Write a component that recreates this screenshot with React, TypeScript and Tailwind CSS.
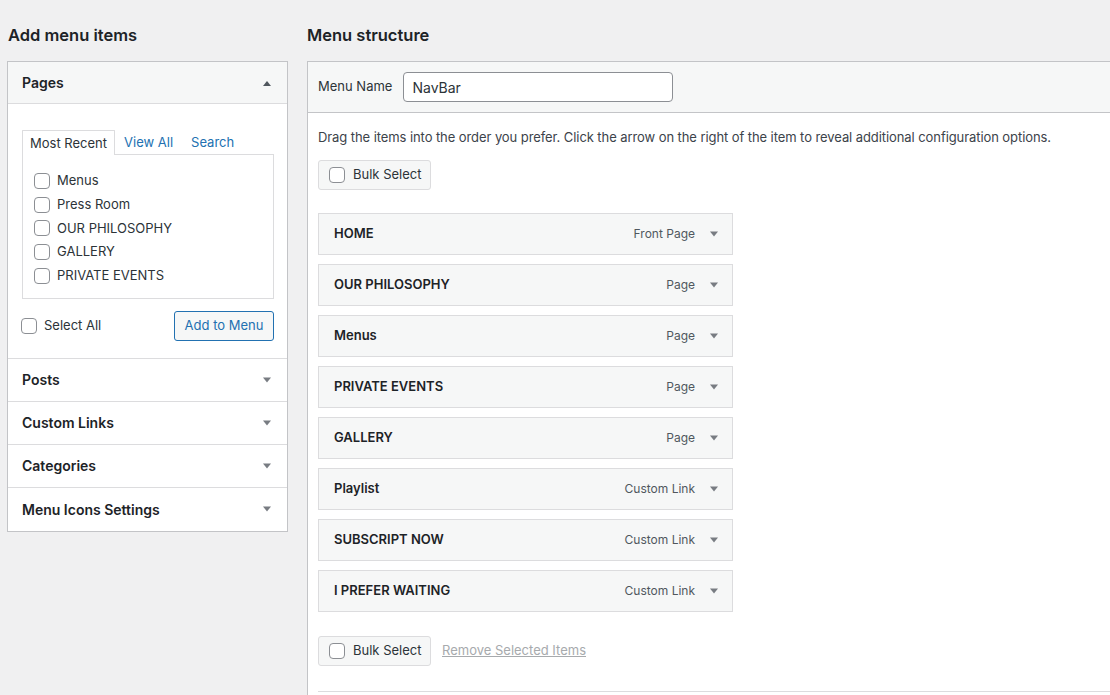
import React from "react";

const font = { fontFamily: "Inter, 'Noto Sans', 'Liberation Sans', sans-serif" };

function Check({ className = "" }: { className?: string }) {
  return (
    <span
      className={`inline-block h-4 w-4 shrink-0 rounded-[4px] border border-[#8c8f94] bg-white ${className}`}
    />
  );
}

function Tri({ up = false }: { up?: boolean }) {
  return (
    <svg width="10" height="6" viewBox="0 0 10 6" className="shrink-0">
      {up ? (
        <path d="M1 6 L5 1 L9 6 Z" fill="#50575e" />
      ) : (
        <path d="M1 0.5 L9 0.5 L5 5.5 Z" fill="#787c82" />
      )}
    </svg>
  );
}

const pages = ["Menus", "Press Room", "OUR PHILOSOPHY", "GALLERY", "PRIVATE EVENTS"];
const sections = ["Posts", "Custom Links", "Categories", "Menu Icons Settings"];
const items: [string, string][] = [
  ["HOME", "Front Page"],
  ["OUR PHILOSOPHY", "Page"],
  ["Menus", "Page"],
  ["PRIVATE EVENTS", "Page"],
  ["GALLERY", "Page"],
  ["Playlist", "Custom Link"],
  ["SUBSCRIPT NOW", "Custom Link"],
  ["I PREFER WAITING", "Custom Link"],
];

function BulkSelect() {
  return (
    <div className="flex h-[30px] w-[113px] items-center gap-[8px] rounded-[3px] border border-[#dcdcde] bg-[#f6f7f7] pl-[10px] text-[13px] text-[#2c3338]">
      <Check />
      <span>Bulk Select</span>
    </div>
  );
}

export default function App() {
  return (
    <div
      className="flex h-[695px] w-[1110px] overflow-hidden bg-[#f0f0f1] text-[#1d2327]"
      style={font}
    >
      {/* left column: add menu items */}
      <div className="ml-[7px] w-[281px] shrink-0">
        <h2 className="pt-[24px] pl-[1px] text-[16.5px] font-semibold leading-[22px]">Add menu items</h2>
        <div className="mt-[15px] border border-[#c3c4c7] bg-white">
          <div className="flex h-[42px] items-center justify-between border-b border-[#dcdcde] bg-[#f6f7f7] pl-[14px] pr-[15px]">
            <span className="text-[14px] font-semibold">Pages</span>
            <Tri up />
          </div>
          <div className="border-b border-[#dcdcde] pl-[14px] pr-[13px] pt-[26px] pb-[17px]">
            <div className="flex items-end text-[13px]">
              <div className="relative z-10 -mb-px h-[25px] rounded-t-[1px] border border-b-0 border-[#dcdcde] bg-white px-[7px] leading-[24px] text-[#2c3338]">
                Most Recent
              </div>
              <span className="ml-[9px] leading-[24px] text-[#2271b1]">View All</span>
              <span className="ml-[18px] leading-[24px] text-[#2271b1]">Search</span>
            </div>
            <div className="border border-[#dcdcde] pt-[14px] pb-[10px] pl-[11px]">
              {pages.map((p) => (
                <div key={p} className="flex h-[23.75px] items-center gap-[7px] text-[13px] text-[#2c3338]">
                  <Check />
                  <span>{p}</span>
                </div>
              ))}
            </div>
            <div className="mt-[12px] flex items-center justify-between">
              <div className="-ml-px flex items-center gap-[7px] text-[13px] text-[#2c3338]">
                <Check />
                <span>Select All</span>
              </div>
              <div className="flex h-[30px] w-[100px] items-center justify-center rounded-[3px] border border-[#2271b1] bg-[#f6f7f7] text-[13px] text-[#2271b1]">
                Add to Menu
              </div>
            </div>
          </div>
          {sections.map((s, i) => (
            <div
              key={s}
              className={`flex h-[43px] items-center justify-between pl-[14px] pr-[15px] ${
                i < sections.length - 1 ? "border-b border-[#dcdcde]" : ""
              }`}
            >
              <span className="text-[14px] font-semibold">{s}</span>
              <Tri />
            </div>
          ))}
        </div>
      </div>

      {/* right column: menu structure */}
      <div className="ml-[19px] w-[840px] shrink-0">
        <h2 className="pt-[24px] text-[16.5px] font-semibold leading-[22px]">Menu structure</h2>
        <div className="mt-[15px] h-[700px] border border-[#c3c4c7] bg-white">
          <div className="flex h-[51px] items-center border-b border-[#c3c4c7] bg-[#f6f7f7] pl-[10px]">
            <span className="text-[13px] text-[#2c3338]">Menu Name</span>
            <div className="ml-[11px] flex h-[30px] w-[270px] items-center rounded-[4px] border border-[#8c8f94] bg-white pl-[8px] text-[14px] text-[#2c3338]">
              NavBar
            </div>
          </div>
          <div className="px-[10px] pt-[14px]">
            <p className="text-[13px] leading-[20px] tracking-[-0.08px] text-[#3c434a]">
              Drag the items into the order you prefer. Click the arrow on the right of the item to reveal additional configuration options.
            </p>
            <div className="mt-[13px]">
              <BulkSelect />
            </div>
            <div className="mt-[23px] flex flex-col gap-[9px]">
              {items.map(([title, type]) => (
                <div
                  key={title}
                  className="flex h-[42px] w-[415px] items-center justify-between border border-[#dcdcde] bg-[#f6f7f7] pl-[15px] pr-[13px]"
                >
                  <span className="text-[13px] font-semibold text-[#1d2327]">{title}</span>
                  <div className="flex items-center gap-[14px]">
                    <span className="text-[12px] text-[#50575e]">{type}</span>
                    <Tri />
                  </div>
                </div>
              ))}
            </div>
            <div className="mt-[24px] flex items-center gap-[11px]">
              <BulkSelect />
              <span className="text-[13px] text-[#a7aaad] underline">Remove Selected Items</span>
            </div>
            <div className="mt-[25px] border-t border-[#dcdcde]" />
          </div>
        </div>
      </div>
    </div>
  );
}
